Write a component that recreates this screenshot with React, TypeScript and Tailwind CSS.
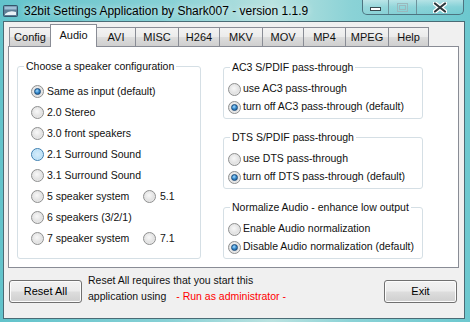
import React from "react";

type RadioProps = { checked?: boolean; hover?: boolean };

function Radio({ checked, hover }: RadioProps) {
  const ring = hover
    ? "border-[#3c7fb1] bg-[radial-gradient(circle_at_50%_50%,#d6ecfa_0%,#bfe2f7_55%,#e8f4fc_100%)]"
    : "border-[#8e8f8f] bg-[radial-gradient(circle_at_45%_40%,#f8f8f8_0%,#e2e2e2_55%,#f4f4f4_100%)]";
  return (
    <span className={`flex h-[13px] w-[13px] shrink-0 items-center justify-center rounded-full border ${ring}`}>
      {checked && (
        <span className="h-[7px] w-[7px] rounded-full border border-[#1b4b7a] bg-[radial-gradient(circle_at_40%_35%,#a6dcff_0%,#3c8fd0_45%,#104a85_100%)]" />
      )}
    </span>
  );
}

function Option({ label, checked, hover, gap = "gap-[3px]" }: { label: string; checked?: boolean; hover?: boolean; gap?: string }) {
  return (
    <div className={`flex items-center ${gap}`}>
      <Radio checked={checked} hover={hover} />
      <span className="whitespace-nowrap">{label}</span>
    </div>
  );
}

function Group({ title, children, className }: { title: string; children: React.ReactNode; className?: string }) {
  return (
    <fieldset className={`rounded-[3px] border border-[#d5dfe5] ${className ?? ""}`}>
      <legend className="ml-[6px] px-[2px] leading-[12px]">{title}</legend>
      {children}
    </fieldset>
  );
}

const tabs = [
  { name: "Config", w: "w-[42px]" },
  { name: "Audio", w: "w-[47px]", active: true },
  { name: "AVI", w: "w-[40px]" },
  { name: "MISC", w: "w-[44px]" },
  { name: "H264", w: "w-[42px]" },
  { name: "MKV", w: "w-[44px]" },
  { name: "MOV", w: "w-[42px]" },
  { name: "MP4", w: "w-[43px]" },
  { name: "MPEG", w: "w-[44px]" },
  { name: "Help", w: "w-[41px]" },
];

const speakers: { label: string; checked?: boolean; hover?: boolean; extra?: string }[] = [
  { label: "Same as input (default)", checked: true },
  { label: "2.0 Stereo" },
  { label: "3.0 front speakers" },
  { label: "2.1 Surround Sound", hover: true },
  { label: "3.1 Surround Sound" },
  { label: "5 speaker system", extra: "5.1" },
  { label: "6 speakers (3/2/1)" },
  { label: "7 speaker system", extra: "7.1" },
];

const passThrough = [
  { title: "AC3 S/PDIF pass-through", a: "use AC3 pass-through", b: "turn off AC3 pass-through (default)" },
  { title: "DTS S/PDIF pass-through", a: "use DTS pass-through", b: "turn off DTS pass-through (default)" },
  { title: "Normalize Audio - enhance low output", a: "Enable Audio normalization", b: "Disable Audio normalization (default)" },
];

function WinButton({ label, className }: { label: string; className?: string }) {
  return (
    <button
      className={`h-[23px] w-[73px] rounded-[3px] border border-[#707070] bg-[linear-gradient(180deg,#f2f2f2_0%,#ebebeb_48%,#dddddd_52%,#cfcfcf_100%)] text-[11px] leading-[21px] text-black shadow-[inset_0_0_0_1px_#fcfcfc] ${className ?? ""}`}
    >
      {label}
    </button>
  );
}

export default function App() {
  return (
    <div className="relative h-[322px] w-[470px] overflow-hidden bg-[linear-gradient(90deg,#62c3cb_0%,#86d0d5_35%,#b9e2e0_58%,#8ad2d6_75%,#6cc8cf_100%)] font-['Liberation_Sans',Arial,sans-serif] text-[10.5px] text-[#111]">
      {/* title bar */}
      <div className="flex h-[21px] items-center">
        <svg className="ml-[3px] mt-[1px]" width="15" height="12" viewBox="0 0 15 12">
          <rect x="0.5" y="0.5" width="14" height="11" rx="1" fill="#5d7f96" stroke="#34546a" />
          <rect x="1.5" y="1.5" width="12" height="3" fill="#9fc0d6" />
          <path d="M2 9 Q6 5 13 7 L13 10 L2 10 Z" fill="#e8f2f7" />
        </svg>
        <span className="ml-[6px] text-[12px] text-black [text-shadow:0_0_6px_rgba(255,255,255,0.9)]">
          32bit Settings Application by Shark007 - version 1.1.9
        </span>
      </div>
      <div className="absolute left-[362px] top-0 flex h-[15px] overflow-hidden rounded-b-[5px] border border-t-0 border-[#4d7480] bg-[linear-gradient(180deg,rgba(255,255,255,0.45)_0%,rgba(255,255,255,0.15)_50%,rgba(255,255,255,0.05)_100%)]">
        <div className="flex w-[26px] items-end justify-center border-r border-[#6d939c] pb-[3px]">
          <svg width="11" height="4" viewBox="0 0 11 4">
            <rect x="0.5" y="0.5" width="10" height="3" fill="#fff" stroke="#3a4a50" />
          </svg>
        </div>
        <div className="flex w-[28px] items-center justify-center border-r border-[#6d939c]">
          <svg width="11" height="9" viewBox="0 0 11 9">
            <rect x="0.5" y="0.5" width="10" height="8" fill="none" stroke="#9ab8bd" />
            <rect x="2.5" y="2.5" width="6" height="4" fill="none" stroke="#9ab8bd" />
          </svg>
        </div>
        <div className="flex w-[46px] items-center justify-center">
          <svg width="14" height="11" viewBox="0 0 14 11">
            <path d="M2 1.5 L12 9.5 M12 1.5 L2 9.5" stroke="#fff" strokeWidth="4.5" strokeLinecap="round" />
            <path d="M2 1.5 L12 9.5 M12 1.5 L2 9.5" stroke="#2e3a3e" strokeWidth="2.2" strokeLinecap="round" />
          </svg>
        </div>
      </div>

      {/* client area */}
      <div className="ml-[3px] flex h-[298px] w-[462px] flex-col border border-[#4a6b75] bg-[#f0f0f0]">
        <div className="flex h-[24px] items-end pl-[5px] text-[11px]">
          {tabs.map((t) =>
            t.active ? (
              <div
                key={t.name}
                className={`relative z-10 -mb-px -mr-px flex h-[23px] ${t.w} justify-center border border-b-0 border-[#898c95] bg-white pt-[4px] leading-[13px]`}
              >
                {t.name}
              </div>
            ) : (
              <div
                key={t.name}
                className={`-mr-px flex h-[19px] ${t.w} justify-center border border-b-0 border-[#898c95] bg-[linear-gradient(180deg,#f3f3f3_0%,#ebebeb_50%,#dddddd_51%,#cfcfcf_100%)] pt-[3px] leading-[13px]`}
              >
                {t.name}
              </div>
            )
          )}
        </div>

        <div className="ml-[4px] flex h-[222px] w-[451px] border border-[#898c95] bg-white pl-[8px]">
          <div className="pt-[13px]">
            <Group title="Choose a speaker configuration" className="h-[199px] w-[184px]">
              <div className="flex flex-col pl-[13px] pt-[9px]">
                {speakers.map((s) => (
                  <div key={s.label} className="flex h-[21px] items-center">
                    <div className="w-[112px]">
                      <Option label={s.label} checked={s.checked} hover={s.hover} />
                    </div>
                    {s.extra && <Option label={s.extra} gap="gap-[4px]" />}
                  </div>
                ))}
              </div>
            </Group>
          </div>
          <div className="ml-[22px] flex flex-col gap-[12px] pt-[14px]">
            {passThrough.map((g) => (
              <Group key={g.title} title={g.title} className="h-[58px] w-[200px]">
                <div className="flex flex-col pl-[4px] pt-[7px]">
                  <div className="flex h-[18px] items-center">
                    <Option label={g.a} gap="gap-[2px]" />
                  </div>
                  <div className="flex h-[18px] items-center">
                    <Option label={g.b} checked gap="gap-[2px]" />
                  </div>
                </div>
              </Group>
            ))}
          </div>
        </div>

        <div className="flex items-start pl-[5px] pr-[7px]">
          <WinButton label="Reset All" className="mt-[12px]" />
          <div className="ml-[6px] mt-[4px] leading-[16px]">
            <div>Reset All requires that you start this</div>
            <div>
              application using<span className="ml-[10px] text-[#ff0000]">- Run as administrator -</span>
            </div>
          </div>
          <WinButton label="Exit" className="ml-auto mt-[12px]" />
        </div>
      </div>
    </div>
  );
}
